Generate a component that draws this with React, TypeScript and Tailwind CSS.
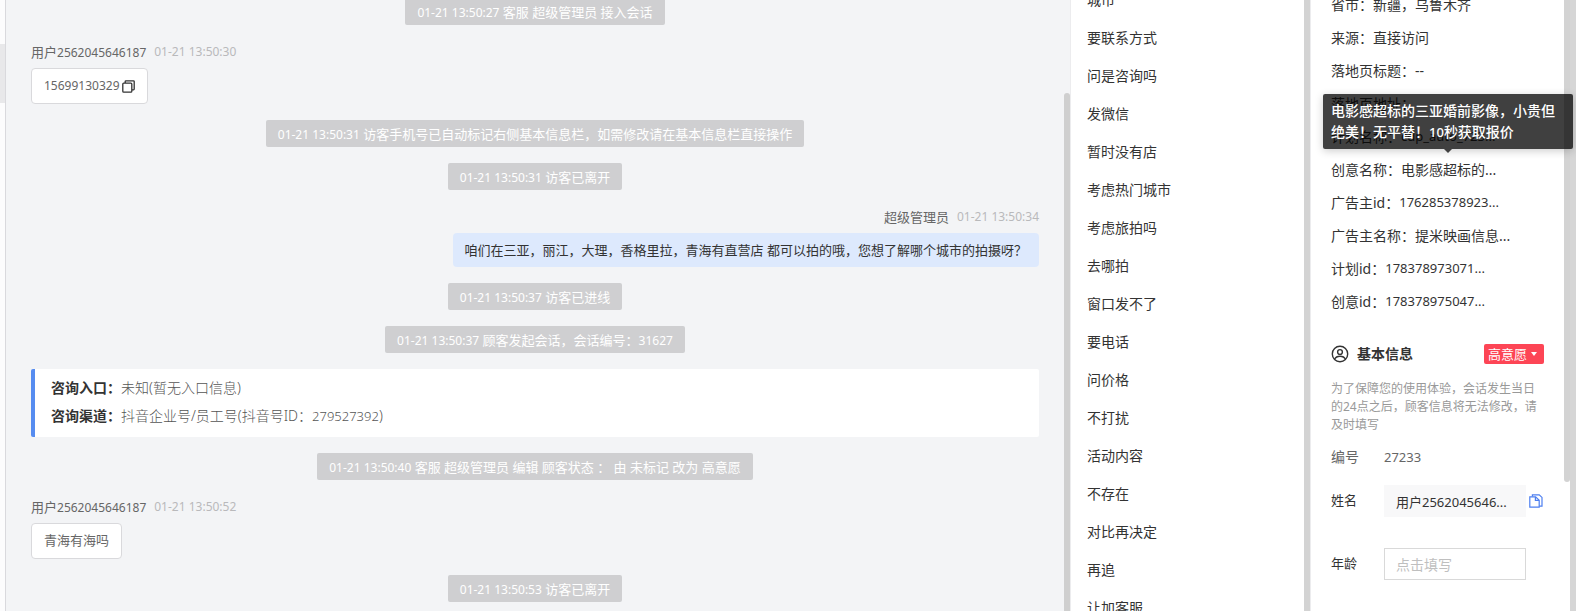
import type { ReactNode } from 'react';

const quickReplies = [
  '城市',
  '要联系方式',
  '问是咨询吗',
  '发微信',
  '暂时没有店',
  '考虑热门城市',
  '考虑旅拍吗',
  '去哪拍',
  '窗口发不了',
  '要电话',
  '问价格',
  '不打扰',
  '活动内容',
  '不存在',
  '对比再决定',
  '再追',
  '让加客服',
];

const visitorInfo = [
  { label: '省市', value: '新疆，乌鲁木齐' },
  { label: '来源', value: '直接访问' },
  { label: '落地页标题', value: '--' },
  { label: '落地页地址', value: '' },
  { label: '计划名称', value: 'cdp_auto_723...', latin: true },
  { label: '创意名称', value: '电影感超标的...' },
  { label: '广告主id', value: '176285378923...', latin: true },
  { label: '广告主名称', value: '提米映画信息...' },
  { label: '计划id', value: '178378973071...', latin: true },
  { label: '创意id', value: '178378975047...', latin: true },
];

const CopyIcon = () => (
  <svg viewBox="0 0 13 13" className="h-[13px] w-[13px]" fill="none" stroke="#333" strokeWidth="1.3">
    <rect x="0.8" y="3.2" width="9" height="9" rx="0.9" />
    <path d="M3.200 3V1.500a.7.7 0 0 1 .7-.7h7.6a.7.7 0 0 1 .7.700v7.600a.7.7 0 0 1-.7.700H10" />
  </svg>
);

const DocCopyIcon = () => (
  <svg viewBox="0 0 14 14" className="h-3.5 w-3.5" fill="none" stroke="#4d7ff0" strokeWidth="1.2">
    <path d="M.8 2.800h5.800l3.600 3.400v7H.8z" />
    <path d="M6.400 3v3.400h3.600" />
    <path d="M3.400 2.600V.800h6.800l2.800 2.600v8.800h-2.600" />
  </svg>
);

const UserIcon = () => (
  <svg viewBox="0 0 18 18" className="h-[18px] w-[18px]" fill="none" stroke="#333" strokeWidth="1.4">
    <circle cx="9" cy="9" r="7.7" />
    <circle cx="9" cy="7" r="2.4" />
    <path d="M3.6 14.2c.9-2 2.9-3 5.4-3s4.5 1 5.4 3" />
  </svg>
);

const Notice = ({ time, children }: { time: string; children: ReactNode }) => (
  <div className="flex justify-center">
    <div className="h-[27px] whitespace-nowrap rounded-xs bg-[#cfcfd1] px-3 text-[13px] leading-7 text-white">
      <time className="text-xs">{time}</time> {children}
    </div>
  </div>
);

const MessageHead = ({ name, time, right }: { name: ReactNode; time: string; right?: boolean }) => (
  <div className={`mb-[5px] flex gap-2 text-[13px] leading-[22px] text-[#666] ${right ? 'justify-end' : ''}`}>
    <span>{name}</span>
    <time className="text-xs leading-[22px] text-[#b9b9bb]">{time}</time>
  </div>
);

const Chat = () => (
  <main className="flex min-w-0 flex-1 overflow-hidden bg-[#f3f4f6]">
    <div className="-mt-0.5 flex min-w-0 flex-1 flex-col gap-4 px-[25px]">
      <Notice time="01-21 13:50:27">客服 超级管理员 接入会话</Notice>

      <div>
        <MessageHead name={<>用户<span className="text-xs">2562045646187</span></>} time="01-21 13:50:30" />
        <div className="flex h-9 w-fit items-center rounded border border-[#d9d9dc] bg-white px-3 text-[#666]">
          <span className="text-xs">15699130329</span>
          <button type="button" aria-label="复制手机号" className="ml-0.5">
            <CopyIcon />
          </button>
        </div>
      </div>

      <Notice time="01-21 13:50:31">访客手机号已自动标记右侧基本信息栏，如需修改请在基本信息栏直接操作</Notice>
      <Notice time="01-21 13:50:31">访客已离开</Notice>

      <div>
        <MessageHead name="超级管理员" time="01-21 13:50:34" right />
        <div className="ml-auto h-[34px] w-fit rounded bg-[#dde9fd] px-3 text-[13px] leading-[34px] text-[#333]">
          咱们在三亚，丽江，大理，香格里拉，青海有直营店 都可以拍的哦，您想了解哪个城市的拍摄呀？
        </div>
      </div>

      <Notice time="01-21 13:50:37">访客已进线</Notice>
      <Notice time="01-21 13:50:37">
        顾客发起会话，会话编号：<span className="text-xs">31627</span>
      </Notice>

      <div className="rounded-xs border-l-4 border-[#568cf0] bg-white px-4 pb-[7px] pt-[5px] text-sm leading-7 text-[#555]">
        <p>
          <b className="text-[#333]">咨询入口：</b>
          <span className="font-light">未知(暂无入口信息)</span>
        </p>
        <p>
          <b className="text-[#333]">咨询渠道：</b>
          <span className="font-light">
            抖音企业号/员工号(抖音号ID：<span className="text-[13px]">279527392</span>)
          </span>
        </p>
      </div>

      <Notice time="01-21 13:50:40">客服 超级管理员 编辑 顾客状态 ： 由 未标记 改为 高意愿</Notice>

      <div>
        <MessageHead name={<>用户<span className="text-xs">2562045646187</span></>} time="01-21 13:50:52" />
        <div className="flex h-9 w-fit items-center rounded border border-[#d9d9dc] bg-white px-3 text-[13px] text-[#666]">
          青海有海吗
        </div>
      </div>

      <Notice time="01-21 13:50:53">访客已离开</Notice>
    </div>
    <div className="flex w-[7px] shrink-0 border-r border-[#ececee] pt-[93px]">
      <div className="w-1.5 rounded-t-full bg-[#cfcfcf]" />
    </div>
  </main>
);

const QuickReplies = () => (
  <nav className="flex w-60 shrink-0 overflow-hidden bg-white">
    <ul className="-mt-[19px] flex-1 pl-4 text-sm text-[#333]">
      {quickReplies.map((item) => (
        <li key={item} className="h-[38px] leading-[38px]">
          {item}
        </li>
      ))}
    </ul>
    <div className="w-[7px] border-r border-[#ececee] bg-[#d3d3d3]" />
  </nav>
);

const Tooltip = () => (
  <div
    role="tooltip"
    className="absolute left-3 right-[3px] top-[94px] rounded-xs bg-black/75 px-2 py-1.5 text-sm font-medium leading-[21px] text-white shadow-[0_2px_8px_rgba(0,0,0,0.2)]"
  >
    电影感超标的三亚婚前影像，小贵但绝美！无平替！<span className="text-[13px]">10</span>秒获取报价
    <svg viewBox="0 0 8 4" className="absolute left-1/2 top-full h-1 w-2 -translate-x-1/2" fill="#404040">
      <path d="M0 0h8L4 4z" />
    </svg>
  </div>
);

const VisitorPanel = () => (
  <aside className="relative flex w-[265px] shrink-0 bg-white">
    <div className="min-w-0 flex-1 overflow-hidden px-5">
      <dl className="-mt-3 text-sm text-[#333]">
        {visitorInfo.map(({ label, value, latin }) => (
          <div key={label} className="flex h-[33px] whitespace-nowrap leading-[33px]">
            <dt>{label}：</dt>
            <dd className={latin ? 'text-[13px] leading-[33px]' : ''}>{value}</dd>
          </div>
        ))}
      </dl>

      <div className="mt-[26px] flex h-5 items-center">
        <UserIcon />
        <h2 className="ml-2 flex-1 text-sm font-bold leading-5 text-[#333]">基本信息</h2>
        <button
          type="button"
          className="flex h-5 w-[60px] items-center gap-1 rounded-xs bg-[#fd4555] pl-1 text-[13px] leading-5 text-white"
        >
          高意愿
          <svg viewBox="0 0 6 4" className="h-1 w-1.5" fill="currentColor">
            <path d="M0 0h6L3 4z" />
          </svg>
        </button>
      </div>

      <p className="mt-4 text-xs leading-[18px] text-[#999]">
        为了保障您的使用体验，会话发生当日的24点之后，顾客信息将无法修改，请及时填写
      </p>

      <div className="mt-3 flex text-sm leading-[22px] text-[#666]">
        <span className="w-[53px]">编号</span>
        <span className="text-[13px] leading-[22px]">27233</span>
      </div>

      <div className="mt-[17px] flex items-center">
        <label htmlFor="name" className="w-[53px] text-[13px] text-[#333]">
          姓名
        </label>
        <input
          id="name"
          readOnly
          value="用户2562045646..."
          className="h-8 w-[142px] bg-[#f8f8f9] px-3 text-[13px] text-[#333] outline-none"
        />
        <button type="button" aria-label="复制姓名" className="ml-[3px]">
          <DocCopyIcon />
        </button>
      </div>

      <div className="mt-[31px] flex items-center">
        <label htmlFor="age" className="w-[53px] text-[13px] text-[#333]">
          年龄
        </label>
        <input
          id="age"
          placeholder="点击填写"
          className="h-8 w-[142px] border border-[#d9d9d9] bg-white px-[11px] text-sm outline-none placeholder:text-[#bfbfbf]"
        />
      </div>
    </div>

    {/* inner scrollbar, then the page one */}
    <div className="h-[482px] w-1.5 rounded-b-full bg-[#d3d3d3]" />
    <div className="w-1.5 bg-[#d6d6d6]" />

    <Tooltip />
  </aside>
);

export default function App() {
  return (
    <div className="flex h-screen overflow-hidden bg-white font-['Noto_Sans','Noto_Sans_CJK_SC',sans-serif]">
      <div className="w-1.5 shrink-0 border-r border-[#d9d9dd] bg-[#fcfcfd] pt-11">
        <div className="h-[59px] bg-[#e8e8ea]" />
      </div>
      <Chat />
      <QuickReplies />
      <VisitorPanel />
    </div>
  );
}
